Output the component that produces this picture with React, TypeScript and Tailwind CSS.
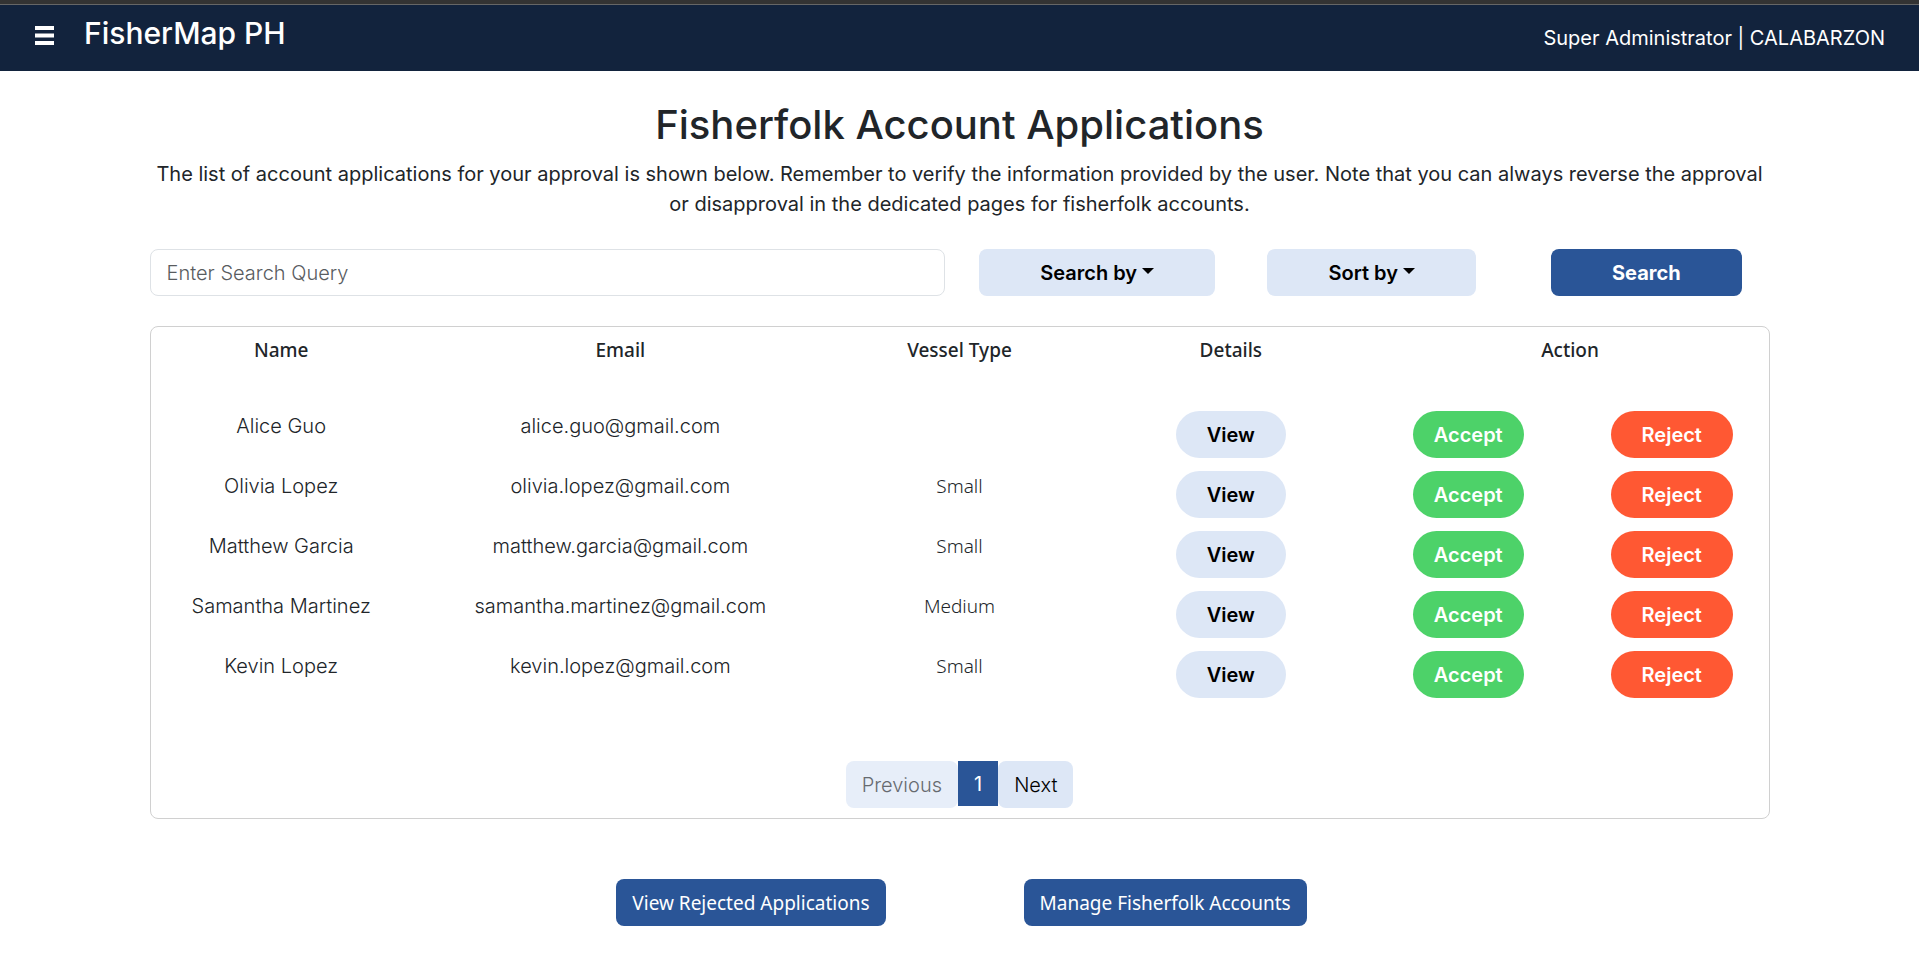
type Application = { name: string; email: string; vessel: string };

const applications: Application[] = [
  { name: "Alice Guo", email: "alice.guo@gmail.com", vessel: "" },
  { name: "Olivia Lopez", email: "olivia.lopez@gmail.com", vessel: "Small" },
  { name: "Matthew Garcia", email: "matthew.garcia@gmail.com", vessel: "Small" },
  { name: "Samantha Martinez", email: "samantha.martinez@gmail.com", vessel: "Medium" },
  { name: "Kevin Lopez", email: "kevin.lopez@gmail.com", vessel: "Small" },
];

function TopBar() {
  return (
    <header className="border-t-4 border-[#333333] bg-[#12233d] text-white">
      <div className="flex h-[67px] items-start justify-between border-t border-[#666666] pr-[34px] pl-[35px]">
        <div className="flex items-start">
          <button type="button" aria-label="Open menu" className="mt-[21px]">
            <svg width="19" height="19" viewBox="0 0 19 19" fill="currentColor" aria-hidden="true">
              <rect y="0" width="19" height="4" />
              <rect y="7.5" width="19" height="4" />
              <rect y="15" width="19" height="4" />
            </svg>
          </button>
          <a href="#home" className="mt-[10px] ml-[30px] text-[30px] leading-9 font-medium">
            FisherMap PH
          </a>
        </div>
        <p className="mt-[18px] text-[20px] leading-[30px]">Super Administrator | CALABARZON</p>
      </div>
    </header>
  );
}

function Dropdown({ label, options, className }: { label: string; options: string[]; className: string }) {
  return (
    <div className={`flex h-[47px] items-center justify-center gap-[5px] rounded-lg bg-[#dde7f6] text-black ${className}`}>
      <select
        aria-label={label}
        className="field-sizing-content cursor-pointer appearance-none bg-transparent text-[20px] leading-[30px] font-semibold"
      >
        <option value="">{label}</option>
        {options.map((option) => (
          <option key={option}>{option}</option>
        ))}
      </select>
      <svg width="12" height="6" viewBox="0 0 12 6" className="mb-1" fill="currentColor" aria-hidden="true">
        <path d="M0 0h12L6 6z" />
      </svg>
    </div>
  );
}

function SearchForm() {
  return (
    <form className="mt-[30px] flex items-center" onSubmit={(e) => e.preventDefault()}>
      <input
        type="search"
        aria-label="Search query"
        placeholder="Enter Search Query"
        className="h-[47px] w-[49.1%] rounded-lg border border-[#dee2e6] px-4 text-[20px] leading-[30px] font-light text-[#212529] placeholder:text-[#595c5f]"
      />
      <Dropdown label="Search by" options={["Name", "Email"]} className="ml-[2.1%] w-[14.6%]" />
      <Dropdown label="Sort by" options={["Name", "Vessel Type"]} className="ml-[3.2%] w-[12.9%]" />
      <button
        type="submit"
        className="ml-[4.6%] h-[47px] w-[11.8%] rounded-lg bg-[#2a5597] text-[20px] leading-[30px] font-bold text-white"
      >
        Search
      </button>
    </form>
  );
}

function ApplicationsTable() {
  return (
    <div className="-mx-[5px]">
      <table className="w-full table-fixed text-center text-[#212529]">
        <colgroup>
          <col className="w-[16.667%]" />
          <col className="w-[25%]" />
          <col className="w-[16.667%]" />
          <col className="w-[16.667%]" />
          <col className="w-[12.5%]" />
          <col className="w-[12.5%]" />
        </colgroup>
        <thead className="font-['Noto_Sans',sans-serif] text-[19px] leading-[30px]">
          <tr className="h-[84px] align-top">
            <th className="pt-2 font-medium">Name</th>
            <th className="pt-2 font-medium">Email</th>
            <th className="pt-2 font-medium">Vessel Type</th>
            <th className="pt-2 font-medium">Details</th>
            <th className="pt-2 font-medium" colSpan={2}>
              Action
            </th>
          </tr>
        </thead>
        <tbody className="text-[20px] leading-[30px]">
          {applications.map((a) => (
            <tr key={a.email} className="h-[60px] align-top">
              <td className="font-light">{a.name}</td>
              <td className="font-light">{a.email}</td>
              <td className="font-['Noto_Sans',sans-serif] text-[19px] font-light">{a.vessel}</td>
              <td>
                <button type="button" className="h-[47px] rounded-full bg-[#dde7f6] px-[31px] font-semibold text-black">
                  View
                </button>
              </td>
              <td>
                <button type="button" className="h-[47px] rounded-full bg-[#4dd269] px-[21px] font-semibold text-white">
                  Accept
                </button>
              </td>
              <td>
                <button type="button" className="h-[47px] rounded-full bg-[#ff5833] px-[31px] font-semibold text-white">
                  Reject
                </button>
              </td>
            </tr>
          ))}
        </tbody>
      </table>
    </div>
  );
}

function Pagination() {
  return (
    <nav
      aria-label="Pages"
      className="mt-[50px] mb-[10px] flex items-start justify-center text-[20px] leading-[30px] font-light"
    >
      <button type="button" disabled className="h-[47px] rounded-lg bg-[#e7eef9] px-4 text-[#666a70]">
        Previous
      </button>
      <button type="button" aria-current="page" className="h-[45px] bg-[#2a5597] px-4 font-normal text-white">
        1
      </button>
      <button type="button" className="h-[47px] rounded-lg bg-[#dde7f6] px-4 text-black">
        Next
      </button>
    </nav>
  );
}

function FooterLink({ href, children }: { href: string; children: string }) {
  return (
    <a
      href={href}
      className="flex h-[47px] items-center rounded-lg bg-[#2a5597] px-4 font-['Noto_Sans',sans-serif] text-[19px] leading-[30px] text-white"
    >
      {children}
    </a>
  );
}

export default function App() {
  return (
    <div className="min-h-screen bg-white font-['Inter',sans-serif] text-[#212529]">
      <TopBar />
      <main className="mx-auto max-w-[1650px] px-[15px] pt-[30px]">
        <h1 className="text-center text-[40px] leading-[48px] font-medium">Fisherfolk Account Applications</h1>
        <p className="mt-[10px] text-center text-[20px] leading-[30px]">
          The list of account applications for your approval is shown below. Remember to verify the information
          provided by the user. Note that you can always reverse the approval or disapproval in the dedicated pages
          for fisherfolk accounts.
        </p>
        <SearchForm />
        <section className="mt-[30px] overflow-hidden rounded-lg border border-[#d0d0d0]">
          <ApplicationsTable />
          <Pagination />
        </section>
        <div className="mt-[60px] mb-[49px] flex justify-center gap-[138px] pl-1">
          <FooterLink href="#rejected">View Rejected Applications</FooterLink>
          <FooterLink href="#accounts">Manage Fisherfolk Accounts</FooterLink>
        </div>
      </main>
    </div>
  );
}
